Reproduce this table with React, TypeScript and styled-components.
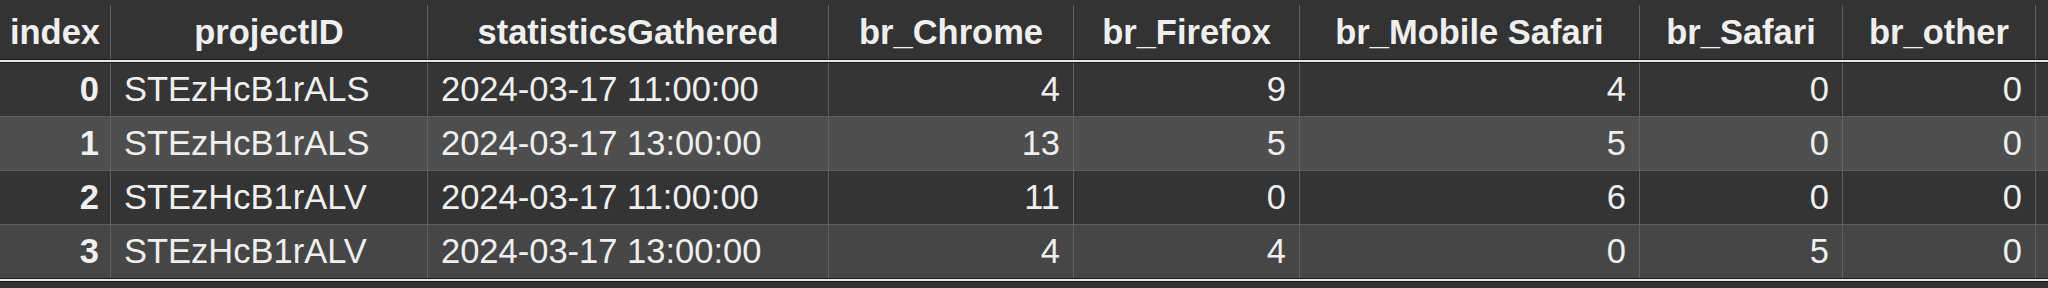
import React from "react";
import styled, { createGlobalStyle } from "styled-components";

const GlobalStyle = createGlobalStyle`
  html, body {
    margin: 0;
    padding: 0;
    background: #333333;
  }
  body {
    font-family: "Liberation Sans", Arial, sans-serif;
    color: #efefef;
  }
`;

const COLS = "111px 317px 401px 245px 226px 340px 203px 193px 1fr";

const Frame = styled.div`
  width: 2048px;
  height: 288px;
  overflow: hidden;
  background: #333333;
`;

const Head = styled.div`
  display: grid;
  grid-template-columns: ${COLS};
  padding-top: 5px;
  background: #333333;
  border-bottom: 1px solid #1c1c1c;
  box-shadow: 0 2px 0 #e6e6e6, 0 3px 0 #1c1c1c;
  margin-bottom: 3px;
`;

const HeadCell = styled.div`
  height: 54px;
  display: flex;
  align-items: center;
  justify-content: center;
  font-size: 34.5px;
  font-weight: bold;
  white-space: nowrap;
  border-right: 1px solid #606060;
  &:last-child {
    border-right: none;
  }
`;

const Row = styled.div<{ $shade: string }>`
  display: grid;
  grid-template-columns: ${COLS};
  background: ${(p) => p.$shade};
  border-bottom: 1px solid #5c5c5c;
  &:last-child {
    border-bottom: 1px solid #1c1c1c;
    box-shadow: 0 2px 0 #e6e6e6, 0 3px 0 #1c1c1c;
  }
`;

const Cell = styled.div<{ $align?: "left" | "right"; $bold?: boolean }>`
  height: 53px;
  display: flex;
  align-items: center;
  justify-content: ${(p) => (p.$align === "left" ? "flex-start" : "flex-end")};
  padding: 0 13px;
  font-size: 34.5px;
  font-weight: ${(p) => (p.$bold ? "bold" : "normal")};
  white-space: nowrap;
  border-right: 1px solid #606060;
  &:first-child {
    padding-right: 11px;
  }
  &:last-child {
    border-right: none;
  }
`;

const headers = [
  "index",
  "projectID",
  "statisticsGathered",
  "br_Chrome",
  "br_Firefox",
  "br_Mobile Safari",
  "br_Safari",
  "br_other",
  "",
];

const rows = [
  { id: "STEzHcB1rALS", at: "2024-03-17 11:00:00", n: [4, 9, 4, 0, 0] },
  { id: "STEzHcB1rALS", at: "2024-03-17 13:00:00", n: [13, 5, 5, 0, 0] },
  { id: "STEzHcB1rALV", at: "2024-03-17 11:00:00", n: [11, 0, 6, 0, 0] },
  { id: "STEzHcB1rALV", at: "2024-03-17 13:00:00", n: [4, 4, 0, 5, 0] },
];

const shades = ["#353535", "#4e4e4e", "#343434", "#464646"];

export default function App() {
  return (
    <Frame>
      <GlobalStyle />
      <Head>
        {headers.map((h, i) => (
          <HeadCell key={i}>{h}</HeadCell>
        ))}
      </Head>
      {rows.map((r, i) => (
        <Row key={i} $shade={shades[i]}>
          <Cell $bold>{i}</Cell>
          <Cell $align="left">{r.id}</Cell>
          <Cell $align="left">{r.at}</Cell>
          {r.n.map((v, j) => (
            <Cell key={j}>{v}</Cell>
          ))}
          <Cell />
        </Row>
      ))}
    </Frame>
  );
}
